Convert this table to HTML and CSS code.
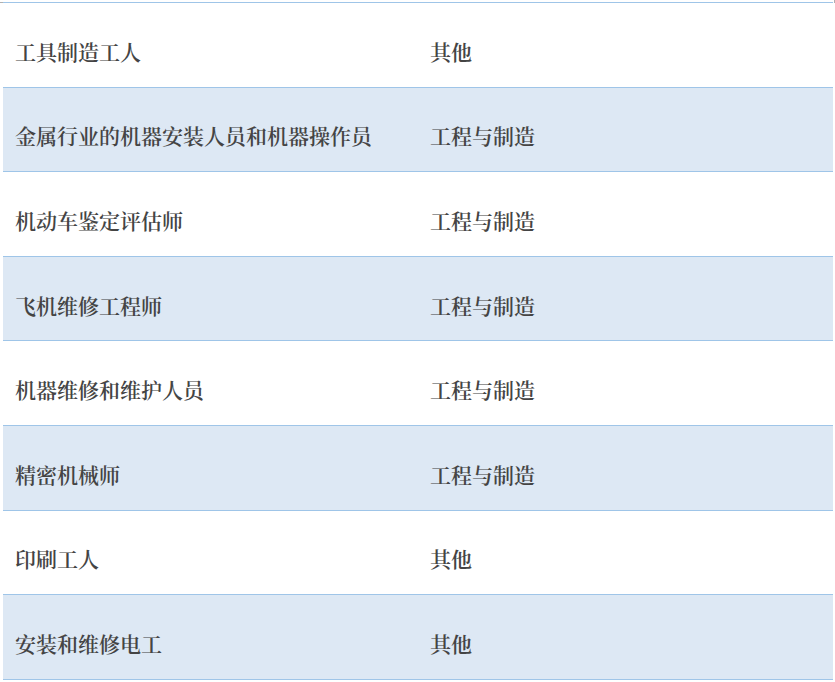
FILE: index.html
```html
<!DOCTYPE html>
<html lang="zh">
<head>
<meta charset="utf-8">
<title>职业列表</title>
<link rel="stylesheet" href="styles.css">
</head>
<body>
<div class="page">
  <div class="corner corner-left"></div>
  <div class="corner corner-right"></div>
  <div class="table">
    <div class="row"><div class="cell name">工具制造工人</div><div class="cell cat">其他</div></div>
    <div class="row alt"><div class="cell name">金属行业的机器安装人员和机器操作员</div><div class="cell cat">工程与制造</div></div>
    <div class="row"><div class="cell name">机动车鉴定评估师</div><div class="cell cat">工程与制造</div></div>
    <div class="row alt"><div class="cell name">飞机维修工程师</div><div class="cell cat">工程与制造</div></div>
    <div class="row"><div class="cell name">机器维修和维护人员</div><div class="cell cat">工程与制造</div></div>
    <div class="row alt"><div class="cell name">精密机械师</div><div class="cell cat">工程与制造</div></div>
    <div class="row"><div class="cell name">印刷工人</div><div class="cell cat">其他</div></div>
    <div class="row alt"><div class="cell name">安装和维修电工</div><div class="cell cat">其他</div></div>
  </div>
</div>
</body>
</html>
```
FILE: styles.css
```css
html, body {
  margin: 0;
  padding: 0;
  background: #ffffff;
}
.page {
  position: relative;
  padding: 2px 2px 0 3px;
  font-family: "Noto Serif CJK SC", "Liberation Serif", "Noto Sans CJK SC", serif;
}
.corner {
  position: absolute;
  top: 0;
  width: 3px;
  height: 3px;
}
.corner-left {
  left: 0;
  border-top: 1px solid #b0b0b0;
  width: 3px;
  height: 0;
  top: 2px;
}
.corner-right {
  right: 0;
  width: 1px;
  height: 3px;
  background: #b0b0b0;
}
.table {
  width: 830px;
  border-top: 1px solid #9fc5e8;
}
.row {
  display: grid;
  grid-template-columns: 415px 1fr;
  height: 84.6px;
  box-sizing: border-box;
  border-bottom: 1px solid #9fc5e8;
  background: #ffffff;
}
.row.alt {
  background: #dde8f4;
}
.cell {
  display: flex;
  align-items: center;
  padding: 12px 12px 0 12px;
  font-size: 21px;
  font-weight: 600;
  color: #444444;
  white-space: nowrap;
}
```
